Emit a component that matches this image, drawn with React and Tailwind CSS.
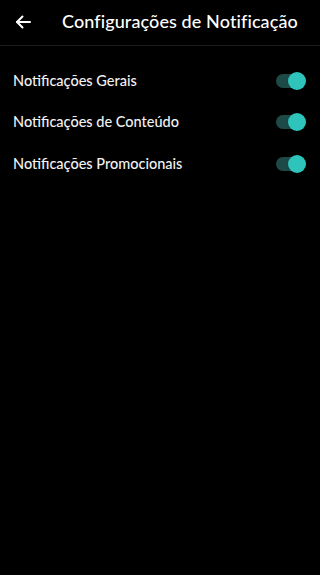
import React, { useState } from 'react';

const settings = [
  { id: 'general', label: 'Notificações Gerais' },
  { id: 'content', label: 'Notificações de Conteúdo' },
  { id: 'promo', label: 'Notificações Promocionais' },
];

const Toggle = ({ checked, onChange }) => (
  <button
    type="button"
    onClick={onChange}
    className="relative flex h-[18px] w-[30px] items-center"
  >
    <span className={`block h-[14px] w-[26px] rounded-full ${checked ? 'bg-[#1d4a47]' : 'bg-[#3a3a3a]'}`} />
    <span
      className={`absolute top-0 h-[18px] w-[18px] rounded-full shadow ${checked ? 'left-[12px] bg-[#2ec4bb]' : 'left-[-4px] bg-[#bdbdbd]'}`}
    />
  </button>
);

const App = () => {
  const [values, setValues] = useState({ general: true, content: true, promo: true });

  return (
    <div className="min-h-[575px] w-full bg-black text-white font-['Lato','Noto_Sans',sans-serif]">
      <div className="flex h-[46px] items-center border-b border-[#1c1c1c] pb-[2px]">
        <button type="button" className="flex w-[62px] items-center pl-[15px] text-white">
          <svg width="16" height="14" viewBox="0 0 16 14" fill="none" stroke="currentColor" strokeWidth="2" strokeLinecap="round" strokeLinejoin="round">
            <path d="M15 7H2" />
            <path d="M7.5 1.5L2 7l5.5 5.5" />
          </svg>
        </button>
        <h1 className="text-[18px] font-medium tracking-[0.1px]">Configurações de Notificação</h1>
      </div>

      <div className="pt-[14px]">
        {settings.map((s) => (
          <div key={s.id} className="flex h-[41.5px] items-center justify-between pl-[13px] pr-[14px]">
            <span className="text-[14.5px] font-medium text-[#f2f2f2]">{s.label}</span>
            <Toggle
              checked={values[s.id]}
              onChange={() => setValues({ ...values, [s.id]: !values[s.id] })}
            />
          </div>
        ))}
      </div>
    </div>
  );
};

export default App;
